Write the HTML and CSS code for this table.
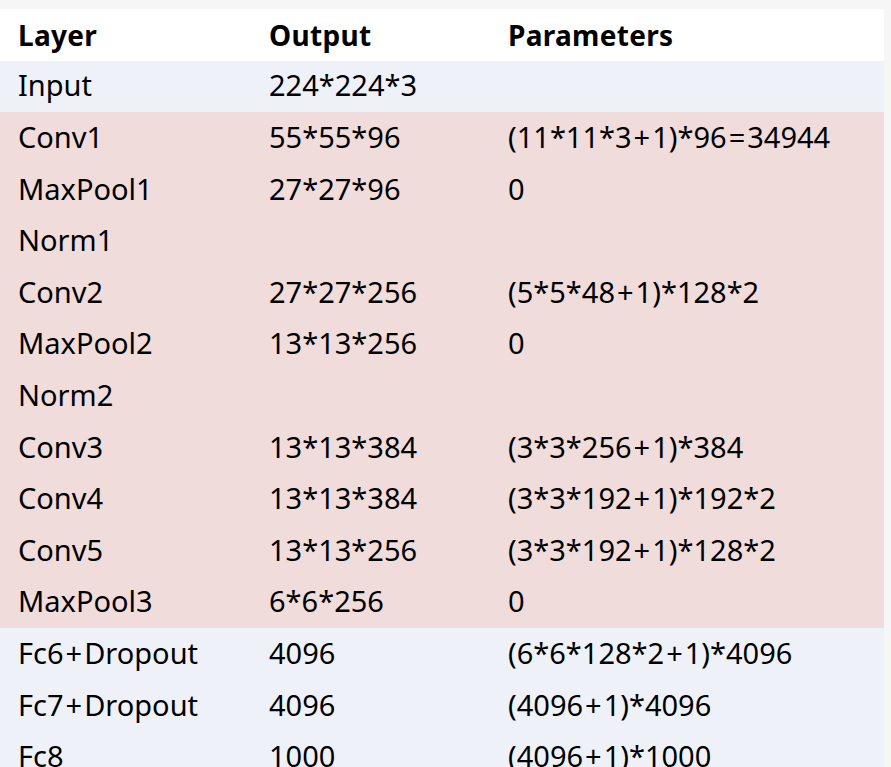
FILE: index.html
```html
<!DOCTYPE html>
<html>
<head>
<meta charset="utf-8">
<link rel="stylesheet" href="styles.css">
</head>
<body>
<div class="page">
<table class="layers">
<thead>
<tr class="head"><th>Layer</th><th>Output</th><th>Parameters</th></tr>
</thead>
<tbody>
<tr class="blue"><td>Input</td><td>224*224*3</td><td></td></tr>
<tr class="pink"><td>Conv1</td><td>55*55*96</td><td>(11*11*3<span class="op">+</span>1)*96<span class="op">=</span>34944</td></tr>
<tr class="pink"><td>MaxPool1</td><td>27*27*96</td><td>0</td></tr>
<tr class="pink"><td>Norm1</td><td></td><td></td></tr>
<tr class="pink"><td>Conv2</td><td>27*27*256</td><td>(5*5*48<span class="op">+</span>1)*128*2</td></tr>
<tr class="pink"><td>MaxPool2</td><td>13*13*256</td><td>0</td></tr>
<tr class="pink"><td>Norm2</td><td></td><td></td></tr>
<tr class="pink"><td>Conv3</td><td>13*13*384</td><td>(3*3*256<span class="op">+</span>1)*384</td></tr>
<tr class="pink"><td>Conv4</td><td>13*13*384</td><td>(3*3*192<span class="op">+</span>1)*192*2</td></tr>
<tr class="pink"><td>Conv5</td><td>13*13*256</td><td>(3*3*192<span class="op">+</span>1)*128*2</td></tr>
<tr class="pink"><td>MaxPool3</td><td>6*6*256</td><td>0</td></tr>
<tr class="blue"><td>Fc6<span class="op">+</span>Dropout</td><td>4096</td><td>(6*6*128*2<span class="op">+</span>1)*4096</td></tr>
<tr class="blue"><td>Fc7<span class="op">+</span>Dropout</td><td>4096</td><td>(4096<span class="op">+</span>1)*4096</td></tr>
<tr class="blue"><td>Fc8</td><td>1000</td><td>(4096<span class="op">+</span>1)*1000</td></tr>
</tbody>
</table>
</div>
</body>
</html>
```
FILE: styles.css
```css
html, body {
  margin: 0;
  padding: 0;
  background: #f6f6f6;
  overflow: hidden;
}
.page {
  padding-top: 9px;
  width: 884px;
}
.layers {
  border-collapse: collapse;
  width: 884px;
  font-family: "Noto Sans", "Open Sans", sans-serif;
  font-size: 29px;
  color: #000;
  table-layout: fixed;
}
.layers th, .layers td {
  height: 51.6px;
  padding: 0 0 3px 18px;
  box-sizing: border-box;
  text-align: left;
  vertical-align: middle;
  white-space: nowrap;
  line-height: 1;
}
.layers th:nth-child(1) { width: 251px; }
.layers th:nth-child(2) { width: 239px; }
.layers th {
  font-weight: 700;
  font-size: 28px;
  padding-bottom: 0;
  letter-spacing: 0.3px;
}
.op {
  margin: 0 2px;
}
.head { background: #ffffff; }
.blue { background: #eef2f8; }
.pink { background: #f0dcdb; }
```
